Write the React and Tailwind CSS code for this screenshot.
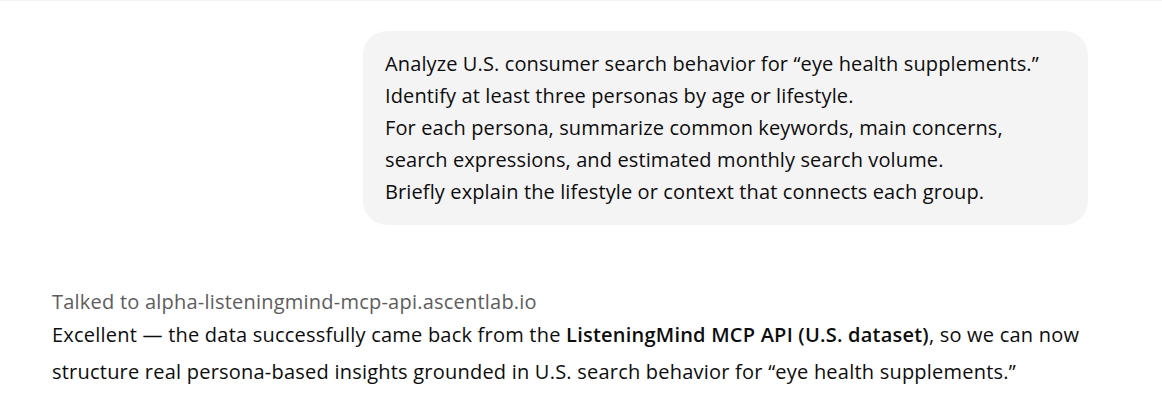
export default function App() {
  const ask = [
    "Analyze U.S. consumer search behavior for “eye health supplements.”",
    "Identify at least three personas by age or lifestyle.",
    "For each persona, summarize common keywords, main concerns,",
    "search expressions, and estimated monthly search volume.",
    "Briefly explain the lifestyle or context that connects each group.",
  ];

  return (
    <div
      className="min-h-[414px] w-[1162px] bg-white border-t border-[#f3f3f3] text-[#0d0d0d]"
      style={{ fontFamily: '"Open Sans", "Noto Sans", sans-serif' }}
    >
      <div className="flex flex-col pl-[52px] pr-[74px] pt-[30px]">
        <div className="self-end w-[725px] rounded-[24px] bg-[#f4f4f4] px-[22px] py-[17px] text-[20px] leading-[32px] tracking-[0.12px]">
          {ask.map((line) => (
            <p key={line} className="whitespace-nowrap">
              {line}
            </p>
          ))}
        </div>

        <div className="mt-[63px] tracking-[0.22px]">
          <p className="text-[20px] leading-[28px] text-[#5d5d5d]">
            Talked to alpha-listeningmind-mcp-api.ascentlab.io
          </p>
          <p className="text-[20px] leading-[37px] whitespace-nowrap">
            Excellent — the data successfully came back from the{" "}
            <strong className="font-semibold">ListeningMind MCP API (U.S. dataset)</strong>, so we can now
            <br />
            structure real persona-based insights grounded in U.S. search behavior for “eye health supplements.”
          </p>
        </div>
      </div>
    </div>
  );
}
